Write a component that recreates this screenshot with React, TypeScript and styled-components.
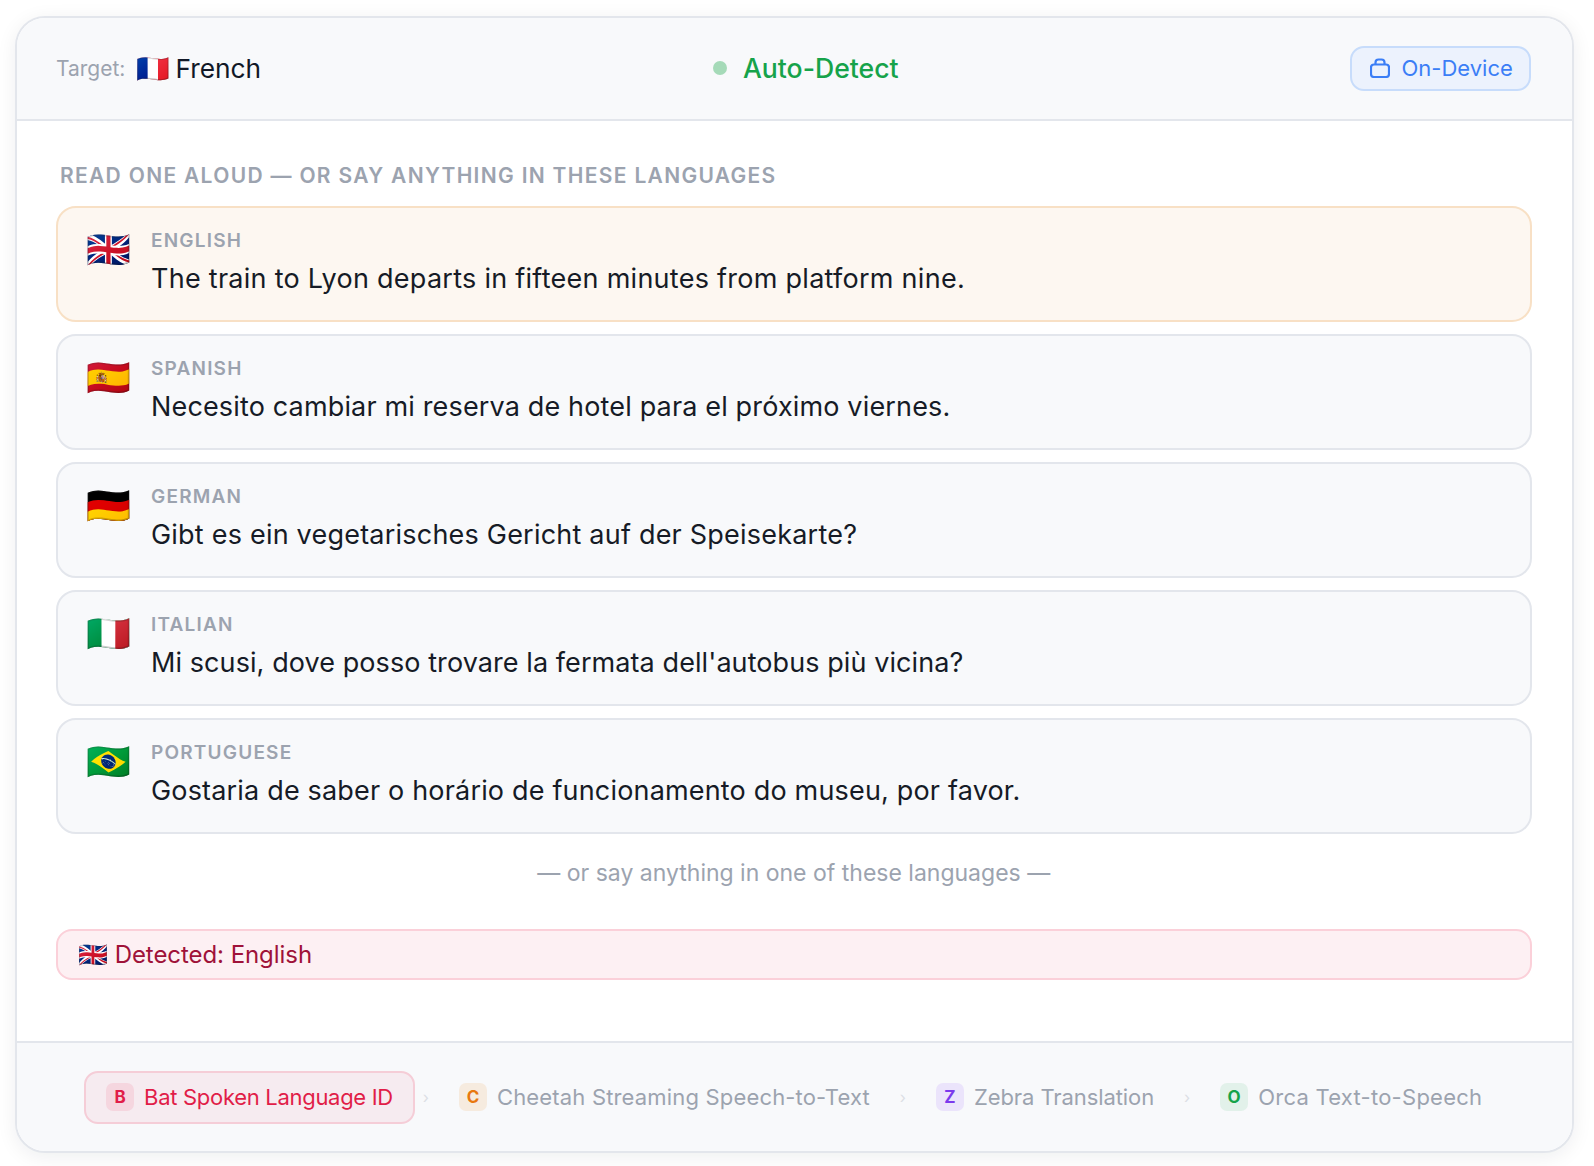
import React from 'react';
import styled, { createGlobalStyle } from 'styled-components';

const Global = createGlobalStyle`
  html, body { margin: 0; padding: 0; background: #ffffff; }
  body { font-family: "Inter", "Noto Sans", sans-serif; }
  * { box-sizing: border-box; }
`;
const Page = styled.div`padding: 16px 14.5px; width: 1594px; height: 1166px; overflow: hidden;`;
const Card = styled.div`
  width: 1559.5px; height: 1137px; border: 2px solid #e3e6ec; border-radius: 30px; background: #fff;
  box-shadow: 0 4px 20px rgba(15,23,42,.07); overflow: hidden; display: flex; flex-direction: column;
`;
const Header = styled.header`
  height: 103px; flex: none; background: #f8f9fb; border-bottom: 2px solid #e3e6ec; display: flex; justify-content: space-between;
  align-items: center; padding: 0 40.5px 0 39.5px;
`;
const Target = styled.div`display: flex; align-items: center; gap: 11px; font-size: 21px; color: #9ca3af;`;
const Strong = styled.span`font-size: 26.3px; color: #111827; display: flex; align-items: center; gap: 5px;`;
const FlagSmall = styled.span`font-size: 27px; line-height: 30px;`;
const Detect = styled.div`display: flex; align-items: center; gap: 16px; margin-bottom: 2px; font-size: 26.6px; font-weight: 500; color: #16a34a;`;
const Dot = styled.span`width: 14px; height: 14px; border-radius: 50%; background: #a5dab8;`;
const Badge = styled.div`
  width: 181px; height: 45px; padding: 0 0 2px 18px; display: flex; align-items: center; gap: 11px; border: 2px solid #c7dcfb; background: #ecf2fd; color: #3b7ef6; border-radius: 14px; font-size: 22px;
`;
const Body = styled.main`flex: 1; padding: 0 40.5px 0 39.5px; display: flex; flex-direction: column;`;
const Title = styled.div`margin: 40px 0 0 4px; height: 30px; line-height: 30px; font-size: 21px; font-weight: 600; letter-spacing: 1.31px; color: #9ca3af;`;
const List = styled.div`display: flex; flex-direction: column; gap: 12.1px; margin-top: 15px;`;
const Row = styled.div<{$active?: boolean}>`
  height: 116px; border-radius: 20px; border: 2px solid ${p => p.$active ? '#f8e0c5' : '#e3e6ec'}; background: ${p => p.$active ? '#fdf7f1' : '#f8f9fb'};
  padding: 21px 28px 0; display: flex; gap: 20px;
`;
const Flag = styled.span`flex: none; width: 45px; margin-top: -2px; font-size: 36px; line-height: 44px;`;
const Lang = styled.div`font-size: 19px; font-weight: 600; letter-spacing: 1.2px; color: #9ca3af; line-height: 24px;`;
const Sentence = styled.div<{$track: number}>`margin-top: 4px; font-size: 27px; line-height: 44px; letter-spacing: ${p => p.$track}px; color: #161b26;`;
const Hint = styled.div`text-align: center; margin-top: 24px; height: 30px; line-height: 30px; font-size: 23px; color: #9ca3af;`;
const Detected = styled.div`
  margin-top: 41px; height: 51px; border: 2px solid #fbd0d9; background: #fdf0f3; border-radius: 16px; padding: 0 20px; display: flex; align-items: center; gap: 5px; font-size: 24px; letter-spacing: -0.06px; color: #9f1239;
`;
const Footer = styled.footer`
  height: 110px; flex: none; border-top: 2px solid #e3e6ec; background: #f8f9fb; display: flex; align-items: center; justify-content: center;
`;
const Step = styled.div<{$active?: boolean; $track: number}>`
  display: flex; align-items: center; gap: 10px; height: 53px; padding: 0 20px; font-size: 22px; border-radius: 14px; letter-spacing: ${p => p.$track}px;
  color: ${p => p.$active ? '#e11d48' : '#9ca3af'}; border: 2px solid ${p => p.$active ? '#f5cdd7' : 'transparent'}; background: ${p => p.$active ? '#f6ebf0' : 'transparent'};
`;
const Letter = styled.span<{$bg: string; $fg: string}>`
  width: 28px; height: 28px; border-radius: 7px; display: flex; align-items: center; justify-content: center; letter-spacing: 0; font-size: 17px; font-weight: 700; background: ${p => p.$bg}; color: ${p => p.$fg};
`;
const Chevron = styled.span`width: 22px; text-align: center; color: #dcdfe5; font-size: 16px;`;

const rows: [string, string, string, number][] = [
  ['🇬🇧','ENGLISH','The train to Lyon departs in fifteen minutes from platform nine.', 0.27],
  ['🇪🇸','SPANISH','Necesito cambiar mi reserva de hotel para el próximo viernes.', 0.153],
  ['🇩🇪','GERMAN','Gibt es ein vegetarisches Gericht auf der Speisekarte?', 0.214],
  ['🇮🇹','ITALIAN',"Mi scusi, dove posso trovare la fermata dell'autobus più vicina?", 0.08],
  ['🇧🇷','PORTUGUESE','Gostaria de saber o horário de funcionamento do museu, por favor.', 0.176],
];
export default function App() {
  return (
    <Page><Global />
      <Card>
        <Header>
          <Target>Target: <Strong><FlagSmall>🇫🇷</FlagSmall> French</Strong></Target>
          <Detect><Dot />Auto-Detect</Detect>
          <Badge>
            <svg width="20" height="20" viewBox="0 0 20 20" fill="none" stroke="currentColor" strokeWidth="2.2"><rect x="1" y="6.5" width="18" height="12.5" rx="3"/><path d="M5.5 6.5V4.5a3 3 0 0 1 3-3h3a3 3 0 0 1 3 3v2"/></svg>
            On-Device
          </Badge>
        </Header>
        <Body>
          <Title>READ ONE ALOUD — OR SAY ANYTHING IN THESE LANGUAGES</Title>
          <List>
            {rows.map((r, i) => (
              <Row key={r[1]} $active={i === 0}>
                <Flag>{r[0]}</Flag>
                <div><Lang>{r[1]}</Lang><Sentence $track={r[3]}>{r[2]}</Sentence></div>
              </Row>
            ))}
          </List>
          <Hint>— or say anything in one of these languages —</Hint>
          <Detected>🇬🇧 Detected: English</Detected>
        </Body>
        <Footer>
          <Step $active $track={-0.3}><Letter $bg="#f5d6df" $fg="#e11d48">B</Letter>Bat Spoken Language ID</Step>
          <Chevron>›</Chevron>
          <Step $track={0.17}><Letter $bg="#f6ebdf" $fg="#e8780f">C</Letter>Cheetah Streaming Speech-to-Text</Step>
          <Chevron>›</Chevron>
          <Step $track={-0.08}><Letter $bg="#ebe4fb" $fg="#7c3aed">Z</Letter>Zebra Translation</Step>
          <Chevron>›</Chevron>
          <Step $track={0.26}><Letter $bg="#e2f1ea" $fg="#16a34a">O</Letter>Orca Text-to-Speech</Step>
        </Footer>
      </Card>
    </Page>
  );
}
